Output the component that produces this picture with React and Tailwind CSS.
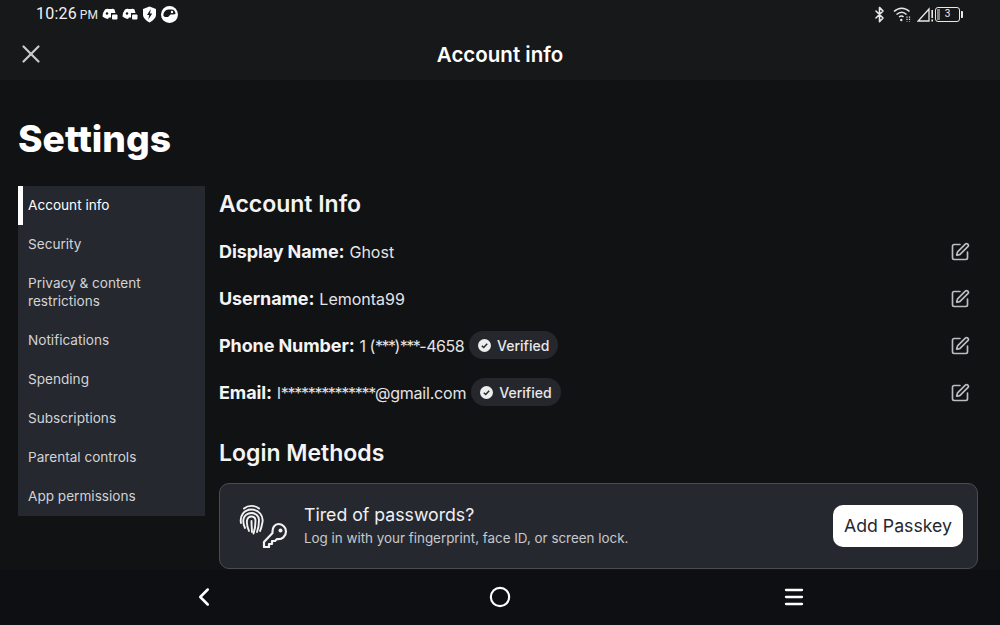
import React from 'react';
import { X, ChevronLeft, Circle, Menu, Bluetooth, SquarePen } from 'lucide-react';

const navItems = ['Account info', 'Security', 'Privacy & content restrictions', 'Notifications', 'Spending', 'Subscriptions', 'Parental controls', 'App permissions'];

function Discord() {
    return (
        <svg width="16" height="13" viewBox="0 0 16 13" fill="white">
            <path d="M3 1.500C4.500.6 5.500.5 6.500 1h3c1-.5 2-.4 3 .5L13.500 5H9v4.500H7L6 11l-2-.5-2-1L.5 8.500 1 5z" />
            <circle cx="5" cy="5.500" r="1.200" fill="#17181a" />
            <rect x="10" y="6.500" width="5.500" height="5" rx="1" />
        </svg>
    );
}

function StatusBar() {
    return (
        <div className="h-[28px] flex items-center justify-between pl-[36px] pr-[36px] font-['Roboto',sans-serif] text-white">
            <div className="flex items-center">
                <span className="text-[16px] tracking-[0.2px] text-[#f2f2f2]">10:26</span>
                <span className="text-[12px] ml-[3px] mt-[2px] text-[#e8e8e8]">PM</span>
                <div className="flex items-center gap-[4px] ml-[4px]">
                    <Discord />
                    <Discord />
                    <svg width="15" height="17" viewBox="0 0 15 17">
                        <path d="M7.500.5 14 3v5.500c0 3.500-3 6-6.500 8C4 14.500 1 12 1 8.500V3z" fill="white" />
                        <path d="M8.800 3 5 9h2.200L6.300 13.500 10.300 7.500H8z" fill="#17181a" />
                    </svg>
                    <svg width="17" height="17" viewBox="0 0 17 17">
                        <circle cx="8.500" cy="8.500" r="8.500" fill="white" />
                        <path d="M2.500 10c-.5-3.500 2-6.500 5-6.500h3c2.500 0 4 2 4 4.500l-2.500.5H9.500L7 11H4z" fill="#17181a" />
                        <circle cx="11" cy="6" r="1.200" fill="white" />
                    </svg>
                </div>
            </div>
            <div className="flex items-center">
                <Bluetooth size={17} strokeWidth={2.2} className="text-[#e8e8e8]" />
                <svg width="18" height="16" viewBox="0 0 18 16" fill="none" stroke="#e8e8e8" strokeWidth="1.500" className="ml-[5px]">
                    <path d="M1 5.500c4.500-4.500 11-4.500 15.500 0M3.500 8.500c3.500-3 7-3 10 0M6 11c1.500-1 3.500-1 4.500 0" />
                    <circle cx="8.300" cy="14" r="1.200" fill="#e8e8e8" stroke="none" />
                    <path d="M14 10.500v5M16.500 10.500v5" strokeWidth="1.200" strokeDasharray="1.200 1" />
                </svg>
                <svg width="17" height="16" viewBox="0 0 17 16" fill="none" stroke="#e8e8e8" strokeWidth="1.300" className="ml-[6px]">
                    <path d="M1.200 15 12 3v12z" />
                    <path d="M15.200 4v8M15.200 13.500V15.500" strokeWidth="1.600" />
                </svg>
                <div className="ml-[1px] relative w-[25px] h-[15px] border border-[#e8e8e8] rounded-[3px] flex items-center justify-center mr-[4px]">
                    <span className="absolute left-[1px] top-[1px] bottom-[1px] w-[3px] bg-[#8a8177]" />
                    <span className="text-[10px] leading-none text-[#f0f0f0]">3</span>
                    <span className="absolute right-[-4px] top-[3px] w-[2px] h-[7px] bg-[#e8e8e8] rounded-r-[1px]" />
                </div>
            </div>
        </div>
    );
}

function Field({ label, children, verified }) {
    return (
        <div className="h-[47px] flex items-center justify-between pr-[8px]">
            <div className="flex items-center">
                <span className="text-[18px] font-bold text-[#f4f4f5] tracking-[-0.1px]">{label}</span>
                <span className="text-[16px] text-[#e4e4e6] ml-[5px]">{children}</span>
                {verified && (
                    <span className="ml-[5px] -mt-[1px] h-[28px] px-[9px] rounded-full bg-[#26272d] flex items-center gap-[6px] text-[14px] font-medium text-[#e8e8ea]">
                        <svg width="13" height="13" viewBox="0 0 13 13">
                            <circle cx="6.500" cy="6.500" r="6.500" fill="#eeeeee" />
                            <path d="M3.800 6.700 5.700 8.500 9.200 4.800" fill="none" stroke="#26272d" strokeWidth="1.500" />
                        </svg>
                        Verified
                    </span>
                )}
            </div>
            <SquarePen size={20} strokeWidth={2} className="text-[#bcbdc0]" />
        </div>
    );
}

export default function App() {
    return (
        <div className="w-[1000px] h-[625px] overflow-hidden flex flex-col bg-[#111214] font-['Inter',sans-serif]">
            <div className="bg-[#17181a] h-[80px] shrink-0">
                <StatusBar />
                <div className="relative h-[52px] pt-[2px] flex items-center justify-center">
                    <X size={30} strokeWidth={1.800} className="absolute left-[16px] top-[11px] text-[#c9c9c9]" />
                    <span className="text-[20.500px] font-semibold text-white">Account info</span>
                </div>
            </div>

            <div className="flex-1 min-h-0 pl-[18px] pr-[22px] overflow-hidden">
                <h1 className="mt-[33px] h-[51px] text-[37.200px] leading-[51px] font-extrabold text-white">Settings</h1>
                <div className="mt-[22px] flex gap-[14px]">
                    <div className="w-[187px] h-[330px] shrink-0 bg-[#26282f]">
                        {navItems.map((item, i) => (
                            <div key={item} className={`px-[10px] pt-[10px] pb-[11px] text-[13.600px] leading-[18px] ${i === 0 ? 'border-l-[5px] border-white pl-[5px] text-white' : 'text-[#d2d3d6]'}`}>
                                {item}
                            </div>
                        ))}
                    </div>
                    <div className="flex-1 min-w-0">
                        <h2 className="text-[23px] leading-[36px] font-semibold text-[#f4f4f5]">Account Info</h2>
                        <div className="mt-[6px]">
                            <Field label="Display Name:">Ghost</Field>
                            <Field label="Username:">Lemonta99</Field>
                            <Field label="Phone Number:" verified>
                                <span className="tracking-[-0.5px]">1 (</span><span className="tracking-[-1.5px]">***</span><span className="tracking-[-0.5px]">)</span><span className="tracking-[-1.5px]">***</span><span className="tracking-[-0.5px]">-4658</span>
                            </Field>
                            <Field label="Email:" verified>
                                l<span className="tracking-[-1.300px]">**************</span><span className="tracking-[-0.200px]">@gmail.com</span>
                            </Field>
                        </div>
                        <h2 className="mt-[19px] text-[23px] leading-[36px] font-semibold text-[#f4f4f5]">Login Methods</h2>
                        <div className="mt-[12px] h-[86px] rounded-[10px] border border-[#4a4c53] bg-[#26282f] flex items-center pl-[19px] pr-[14px]">
                            <svg width="52" height="44" viewBox="0 0 52 44" fill="none" stroke="#f2f2f2" strokeWidth="1.900" strokeLinecap="round">
                                <path d="M5 4.500C9 1 16 1 20 4.500" />
                                <path d="M2 19C.5 12 5 5.500 12.500 5.500S24.500 12 23.500 18c-.5 3-1 6-2.500 9" />
                                <path d="M6 24c-1.500-3-2-6-1.500-9 .5-3.500 4-6 8-6s7.500 3 7.500 7c0 4-.5 8-2 12" />
                                <path d="M10 27c-1.500-3.500-2.500-7-2-10.500C8.500 14 10 12.500 12.500 12.500s4 2 4 4.500c0 4-.5 8-2 12.500" />
                                <path d="M12.500 17c0 4 .3 7 .5 11" />
                                <path d="M25 43h5v-3h3v-3h3l2-2c5 1 9-3 9-7.500S43 20 39.500 20 33 23.500 33.500 29L25 38z" strokeLinejoin="round" strokeWidth="2.200" />
                                <circle cx="41.500" cy="26.500" r="2" fill="#f2f2f2" stroke="none" />
                            </svg>
                            <div className="ml-[13px] mb-[2px] flex-1">
                                <div className="text-[17.700px] leading-[24px] text-[#f0f0f2]">Tired of passwords?</div>
                                <div className="text-[13.400px] leading-[20px] mt-[1px] text-[#c8c9cc]">Log in with your fingerprint, face ID, or screen lock.</div>
                            </div>
                            <button className="w-[130px] h-[42px] rounded-[10px] bg-white text-[17.700px] text-[#26282f]">Add Passkey</button>
                        </div>
                    </div>
                </div>
            </div>

            <div className="relative h-[55px] shrink-0 bg-[#0d0f12] text-white">
                <ChevronLeft size={30} strokeWidth={2} className="absolute left-[189px] top-[12px]" />
                <Circle size={22} strokeWidth={2.300} className="absolute left-[489px] top-[16px]" />
                <Menu size={24} strokeWidth={2.300} className="absolute left-[782px] top-[15px]" />
            </div>
        </div>
    );
}
